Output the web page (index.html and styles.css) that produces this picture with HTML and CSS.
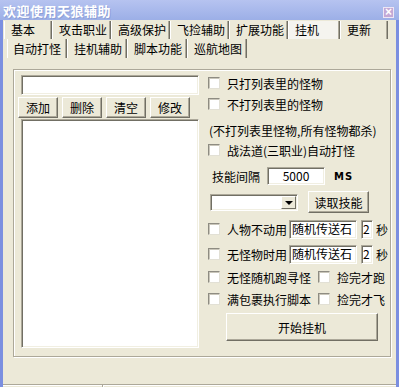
FILE: index.html
```html
<!DOCTYPE html>
<html lang="zh-CN">
<head>
    <meta charset="UTF-8">
    <title>欢迎使用天狼辅助</title>
    <link rel="stylesheet" href="styles.css">
</head>
<body>

<div class="window">
    <div class="titlebar">
        <span class="title">欢迎使用天狼辅助</span>
        <span class="close">×</span>
    </div>

    <div class="frame">
        <div class="tabs tabs-main">
            <div class="tab short">基本</div>
            <div class="tab">攻击职业</div>
            <div class="tab">高级保护</div>
            <div class="tab">飞捡辅助</div>
            <div class="tab">扩展功能</div>
            <div class="tab short active">挂机</div>
            <div class="tab short">更新</div>
        </div>
        <div class="tabs tabs-sub">
            <div class="tab active">自动打怪</div>
            <div class="tab">挂机辅助</div>
            <div class="tab">脚本功能</div>
            <div class="tab">巡航地图</div>
        </div>

        <div class="page">
            <div class="group">
                <div class="col-left">
                    <input type="text" class="field name-field">
                    <div class="btn-row">
                        <button class="btn small">添加</button>
                        <button class="btn small">删除</button>
                        <button class="btn small">清空</button>
                        <button class="btn small">修改</button>
                    </div>
                    <div class="listbox"></div>
                </div>

                <div class="col-right">
                    <div class="row"><span class="check"></span><span class="label">只打列表里的怪物</span></div>
                    <div class="row row-2"><span class="check"></span><span class="label">不打列表里的怪物</span></div>
                    <div class="row row-note">(不打列表里怪物,所有怪物都杀)</div>
                    <div class="row"><span class="check"></span><span class="label">战法道(三职业)自动打怪</span></div>
                    <div class="row row-gap">
                        <span class="caption">技能间隔</span>
                        <span class="field interval">5000</span>
                        <span class="unit">MS</span>
                    </div>
                    <div class="row row-skill">
                        <span class="field combo"><span class="combo-btn"></span></span>
                        <button class="btn read-btn">读取技能</button>
                    </div>
                    <div class="row row-gap">
                        <span class="check"></span><span class="label">人物不动用</span>
                        <span class="field stone">随机传送石</span>
                        <span class="field secs">2</span>
                        <span class="sec-label">秒</span>
                    </div>
                    <div class="row row-gap-s">
                        <span class="check"></span><span class="label">无怪物时用</span>
                        <span class="field stone">随机传送石</span>
                        <span class="field secs">2</span>
                        <span class="sec-label">秒</span>
                    </div>
                    <div class="row row-gap-xs">
                        <span class="check"></span><span class="label wide">无怪随机跑寻怪</span>
                        <span class="check"></span><span class="label">捡完才跑</span>
                    </div>
                    <div class="row row-gap-xxs">
                        <span class="check"></span><span class="label wide">满包裹执行脚本</span>
                        <span class="check"></span><span class="label">捡完才飞</span>
                    </div>
                    <button class="btn start-btn">开始挂机</button>
                </div>
            </div>
        </div>

        <div class="status">
            <div class="status-cell"></div>
        </div>
    </div>
</div>

</body>
</html>
```

FILE: styles.css
```css
* {
    box-sizing: border-box;
}

body {
    margin: 0;
    width: 399px;
    height: 387px;
    overflow: hidden;
    background-color: #ece9d8;
    font-family: "Noto Sans CJK SC", "Liberation Sans", sans-serif;
    font-size: 12px;
    color: #000;
}

.window {
    width: 399px;
    height: 387px;
    display: flex;
    flex-direction: column;
}

/* title bar */
.titlebar {
    height: 20px;
    flex: none;
    display: flex;
    justify-content: space-between;
    padding: 0 5px 0 3px;
    background: linear-gradient(#b6c3f0, #9cafe7);
}

.title {
    color: #fff;
    font-weight: bold;
    font-size: 13px;
    letter-spacing: 0.5px;
    line-height: 21px;
    text-shadow: 1px 1px 0 #8d9fd6;
}

.close {
    width: 11px;
    height: 11px;
    margin-top: 7px;
    background-color: #c3a9d6;
    border: 1px solid #eee6f4;
    color: #fff;
    font-family: "Liberation Sans", sans-serif;
    font-weight: bold;
    font-size: 12px;
    line-height: 8px;
    text-align: center;
}

.frame {
    flex: 1;
    display: flex;
    flex-direction: column;
    border-left: 3px solid #7b8fe0;
    border-right: 3px solid #7b8fe0;
}

/* tabs */
.tabs {
    display: flex;
    flex: none;
}

.tabs-main {
    margin-top: 1px;
    height: 18px;
    padding-left: 1px;
}

.tabs-sub {
    height: 19px;
    padding-left: 4px;
}

.tab {
    width: 59px;
    padding-left: 6px;
    line-height: 18px;
    white-space: nowrap;
    border-left: 1px solid #fff;
    border-right: 1px solid #716f64;
    box-shadow: inset -1px 0 0 #aca899;
}

.tab.short {
    width: 48px;
}

.tab.short.active {
    width: 52px;
}

.tabs-sub .tab {
    width: 60px;
    line-height: 19px;
}

.tab.active {
    background-color: #f5f4ef;
}

.tabs-sub .tab.active {
    background-color: #ece9d8;
    padding-left: 5px;
}

/* page */
.page {
    flex: none;
    height: 326px;
    padding: 11px 5px 0 10px;
}

.group {
    height: 288px;
    display: flex;
    border: 1px solid #aca899;
    box-shadow: 1px 1px 0 #fff, inset 1px 1px 0 #fff;
}

.col-left {
    width: 190px;
    flex: none;
    padding: 5px 0 0 4px;
    display: flex;
    flex-direction: column;
}

.field {
    display: inline-block;
    background-color: #fff;
    border: 1px solid;
    border-color: #aca899 #fff #fff #aca899;
    box-shadow: inset 1px 1px 0 #716f64, inset -1px -1px 0 #f1efe2;
    font: inherit;
    line-height: 16px;
}

.name-field {
    width: 178px;
    height: 20px;
    margin-left: 3px;
    outline: none;
}

.btn-row {
    display: flex;
    gap: 4px;
    margin-top: 2px;
}

.btn {
    font: inherit;
    color: #000;
    background-color: #ece9d8;
    border: 1px solid;
    border-color: #fff #716f64 #716f64 #fff;
    box-shadow: inset -1px -1px 0 #aca899;
    padding: 0;
}

.btn.small {
    width: 40px;
    height: 21px;
}

.listbox {
    width: 178px;
    height: 229px;
    margin: 1px 0 0 3px;
    background-color: #fff;
    border: 1px solid;
    border-color: #aca899 #fff #fff #aca899;
    box-shadow: inset 1px 1px 0 #716f64, inset -1px -1px 0 #f1efe2;
}

/* right column */
.col-right {
    flex: 1;
    padding: 3px 0 0 4px;
    display: flex;
    flex-direction: column;
}

.row {
    height: 20px;
    display: flex;
    align-items: center;
    white-space: nowrap;
}

.row-2 {
    margin-top: 1px;
}

.row-note {
    margin-top: 6px;
    margin-left: 1px;
}

.row-gap {
    margin-top: 6px;
}

.row-gap-s {
    margin-top: 5px;
}

.row-gap-xs {
    margin-top: 3px;
}

.row-gap-xxs {
    margin-top: 2px;
}

.check {
    width: 12px;
    height: 12px;
    flex: none;
    background-color: #fff;
    border: 1px solid;
    border-color: #8e8c82 #e2e0d5 #e2e0d5 #8e8c82;
    box-shadow: inset 1px 1px 0 #c9c6ba;
}

.label {
    margin-left: 7px;
}

.label.wide {
    width: 84px;
    margin-right: 7px;
}

.caption {
    margin-left: 4px;
}

.interval {
    width: 58px;
    height: 18px;
    margin-left: 7px;
    text-align: center;
}

.unit {
    margin-left: 9px;
    font-family: "DejaVu Sans", sans-serif;
    font-weight: bold;
    font-size: 10px;
    letter-spacing: 1px;
}

.row-skill {
    height: 22px;
    margin-top: 5px;
}

.combo {
    position: relative;
    width: 88px;
    height: 17px;
    margin-left: 2px;
}

.combo-btn {
    position: absolute;
    right: 1px;
    top: 1px;
    width: 15px;
    height: 13px;
    background-color: #ece9d8;
    border: 1px solid;
    border-color: #fff #716f64 #716f64 #fff;
}

.combo-btn::after {
    content: "";
    position: absolute;
    left: 3px;
    top: 4px;
    border-left: 4px solid transparent;
    border-right: 4px solid transparent;
    border-top: 4px solid #000;
}

.read-btn {
    width: 61px;
    height: 22px;
    margin-left: 10px;
}

.stone {
    width: 68px;
    height: 19px;
    margin-left: 2px;
    padding-left: 2px;
}

.secs {
    width: 12px;
    height: 19px;
    margin-left: 4px;
    padding-left: 1px;
}

.sec-label {
    margin-left: 3px;
}

.start-btn {
    width: 152px;
    height: 28px;
    margin: 4px 0 0 18px;
}

/* status strip */
.status {
    flex: 1;
    border-top: 1px solid #aca899;
    box-shadow: inset 0 1px 0 #fff;
}

.status-cell {
    width: 100px;
    height: 100%;
    border-right: 1px solid #aca899;
    box-shadow: 1px 0 0 #fff;
}
```
